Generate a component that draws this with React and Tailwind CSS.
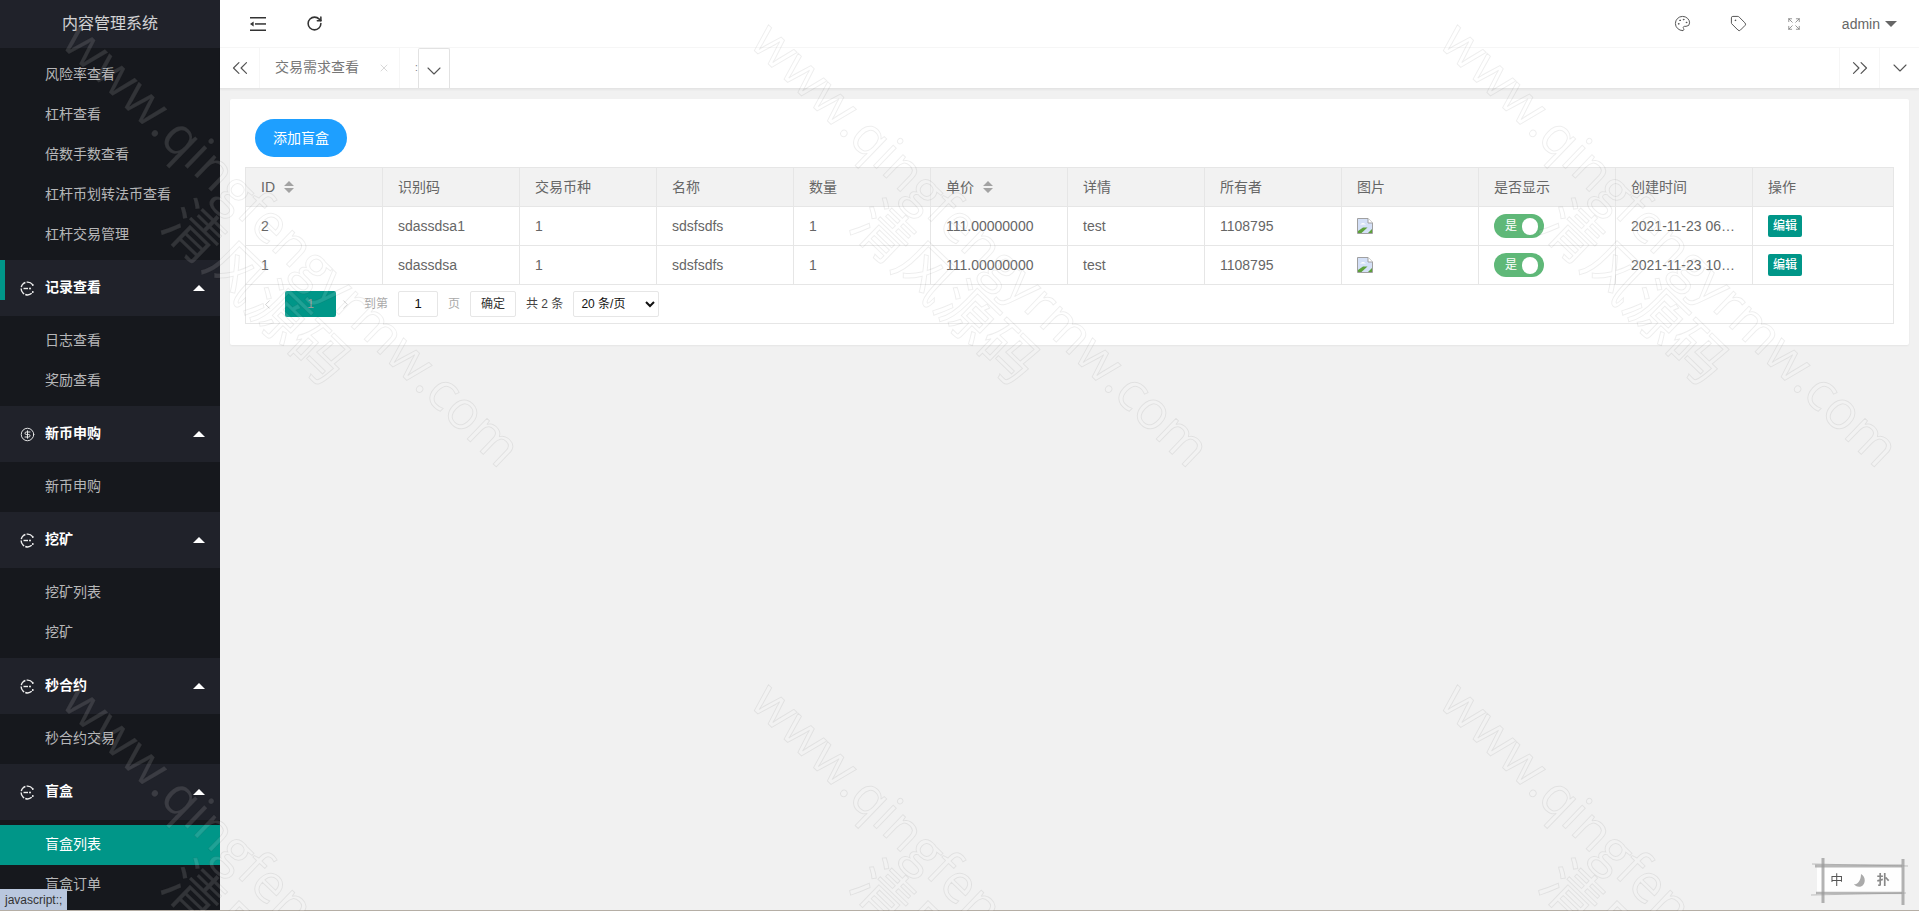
import { ChevronDown, ChevronLeft, ChevronRight, ChevronsLeft, ChevronsRight, CircleDollarSign, Expand, Palette, RotateCw, Tag, X } from 'lucide-react'

const sections = [
  { items: ['风险率查看', '杠杆查看', '倍数手数查看', '杠杆币划转法币查看', '杠杆交易管理'] },
  { title: '记录查看', bar: true, items: ['日志查看', '奖励查看'] },
  { title: '新币申购', dollar: true, items: ['新币申购'] },
  { title: '挖矿', items: ['挖矿列表', '挖矿'] },
  { title: '秒合约', items: ['秒合约交易'] },
  { title: '盲盒', items: ['盲盒列表', '盲盒订单'], active: '盲盒列表' },
]

const columns = [
  { label: 'ID', sort: true },
  { label: '识别码' },
  { label: '交易币种' },
  { label: '名称' },
  { label: '数量' },
  { label: '单价', sort: true },
  { label: '详情' },
  { label: '所有者' },
  { label: '图片' },
  { label: '是否显示' },
  { label: '创建时间' },
  { label: '操作' },
]

const rows = [
  { id: 2, code: 'sdassdsa1', created: '2021-11-23 06:12:45' },
  { id: 1, code: 'sdassdsa', created: '2021-11-23 10:33:08' },
]

function MenuIcon() {
  return (
    <svg width="15" height="15" viewBox="0 0 15 15" fill="none" stroke="currentColor" strokeWidth="1.4">
      <path d="M12.6 3.6A6.4 6.4 0 1 0 12.6 11.4" strokeDasharray="6.5 1.2" />
      <path d="M3.5 7.5h4.5" />
      <circle cx="10" cy="7.5" r="1" fill="currentColor" stroke="none" />
      <path d="M12.8 3v2M12.8 10v2" />
    </svg>
  )
}

function Triangle({ up, className }) {
  return (
    <svg width="12" height="6" viewBox="0 0 12 6" className={className}>
      <path d={up ? 'M6 0L12 6H0Z' : 'M0 0H12L6 6Z'} fill="currentColor" />
    </svg>
  )
}

function SortIcon() {
  return (
    <svg width="10" height="12" viewBox="0 0 10 12" className="ml-[9px] text-[#a3a3a3]">
      <path d="M5 0L10 5H0Z M0 7H10L5 12Z" fill="currentColor" />
    </svg>
  )
}

function ShrinkIcon() {
  return (
    <svg width="16" height="14" viewBox="0 0 16 14" fill="#333">
      <rect x="0" y="0" width="16" height="1.5" />
      <rect x="0" y="12.5" width="16" height="1.5" />
      <rect x="5" y="6.2" width="11" height="1.5" />
      <path d="M0 7L3.6 4.6V9.4Z" />
    </svg>
  )
}

function BrokenImage() {
  return (
    <svg width="16" height="16" viewBox="0 0 16 16">
      <path d="M.5.5H11L15.5 5V15.5H.5Z" fill="#d4e0f7" stroke="#a0a0a0" />
      <path d="M11 .5V5H15.5" fill="#fff" stroke="#a0a0a0" />
      <path d="M3 6.5Q6 3.5 9 6.5Z" fill="#fff" />
      <path d="M1 15V13L6 9.5L10.5 9.5L4.5 15Z" fill="#5da13a" />
      <path d="M11 15L15 11V15Z" fill="#5da13a" />
    </svg>
  )
}

function Sidebar() {
  return (
    <aside className="h-full w-[220px] shrink-0 overflow-hidden bg-[#20222a]">
      <div className="flex h-12 items-center justify-center text-base text-white/80">内容管理系统</div>
      {sections.map((s, i) => (
        <div key={i}>
          {s.title && (
            <div className="relative flex h-14 items-center pl-5 pr-[15px] font-bold text-white">
              {s.bar && <span className="absolute left-0 top-0 h-10 w-[5px] bg-[#009688]" />}
              <span className="flex w-[25px] text-[#eee]">
                {s.dollar ? <CircleDollarSign size={15} strokeWidth={1.5} /> : <MenuIcon />}
              </span>
              <span className="flex-1 -translate-y-px text-sm">{s.title}</span>
              <Triangle up />
            </div>
          )}
          <div className={s.title ? 'bg-[#16181d] py-[5px]' : 'bg-[#16181d] pb-[5px] pt-[7px]'}>
            {s.items.map((item) => (
              <div
                key={item}
                className={`flex h-10 items-center pl-[45px] text-sm ${
                  s.active === item ? 'bg-[#009688] text-white' : 'text-white/70'
                }`}
              >
                <span className="-translate-y-px">{item}</span>
              </div>
            ))}
          </div>
        </div>
      ))}
    </aside>
  )
}

function TopBar() {
  return (
    <div className="flex h-12 shrink-0 items-center border-b border-[#f6f6f6] bg-white">
      <div className="ml-[30px] flex w-[56px]"><ShrinkIcon /></div>
      <RotateCw size={17} strokeWidth={2.2} className="text-[#333]" />
      <div className="ml-auto flex items-center text-[#555]">
        <Palette size={17} strokeWidth={1.4} />
        <Tag size={17} strokeWidth={1.4} className="ml-[39px]" />
        <Expand size={14} strokeWidth={1.3} className="ml-10 text-[#777]" />
        <span className="ml-[41px] text-sm text-[#666]">admin</span>
        <Triangle className="ml-[5px] text-[#666]" />
        <span className="w-[22px]" />
      </div>
    </div>
  )
}

function TabBar() {
  return (
    <div className="flex h-[41px] shrink-0 items-stretch border-b border-[#e4e4e4] bg-white shadow-[0_1px_2px_rgba(0,0,0,0.05)]">
      <div className="flex w-10 items-center justify-center border-r border-[#f6f6f6] text-[#555]">
        <ChevronsLeft size={26} strokeWidth={1.1} />
      </div>
      <div className="flex w-[140px] items-center border-r border-[#f6f6f6] pl-[15px] text-sm text-[#777]">
        <span className="-translate-y-px">交易需求查看</span>
        <X size={12} strokeWidth={1.3} className="ml-[19px] text-[#c2c2c2]" />
      </div>
      <div className="flex w-[18px] items-center pl-[15px] text-[10px] text-[#777]">:</div>
      <div className="flex w-8 items-center justify-center rounded-t-[2px] border-x border-t border-[#e2e2e2] pt-1 text-[#555]">
        <ChevronDown size={24} strokeWidth={1.1} />
      </div>
      <div className="flex-1" />
      <div className="flex w-10 items-center justify-center border-l border-[#f6f6f6] text-[#555]">
        <ChevronsRight size={26} strokeWidth={1.1} />
      </div>
      <div className="flex w-10 items-center justify-center border-l border-[#f6f6f6] text-[#555]">
        <ChevronDown size={24} strokeWidth={1.1} />
      </div>
    </div>
  )
}

function Pager() {
  return (
    <div className="flex h-[39px] items-center border-x border-b border-[#e6e6e6] text-xs">
      <ChevronLeft size={15} strokeWidth={1.2} className="ml-[14px] text-[#c2c2c2]" />
      <div className="ml-[10px] flex h-[26px] w-[51px] items-center justify-center rounded-[2px] bg-[#009688] text-[#999]">1</div>
      <ChevronRight size={15} strokeWidth={1.2} className="ml-[2px] text-[#c2c2c2]" />
      <span className="ml-[11px] text-[#aaa]">到第</span>
      <div className="ml-[10px] flex h-[26px] w-10 items-center justify-center rounded-[2px] border border-[#e6e6e6] text-[13px] text-[#111]">1</div>
      <span className="ml-[10px] text-[#aaa]">页</span>
      <button className="ml-[10px] h-[26px] w-[46px] rounded-[2px] border border-[#e6e6e6] text-[#333]">确定</button>
      <span className="ml-[10px] text-[#444]">共 2 条</span>
      <select className="ml-[10px] h-[26px] w-[86px] rounded-[2px] border border-[#e6e6e6] bg-white pl-[3px] text-[#111]">
        <option>20 条/页</option>
      </select>
    </div>
  )
}

function DataTable() {
  const td = 'h-[39px] border border-[#e6e6e6] px-[15px] text-sm text-[#666]'
  return (
    <>
      <table className="w-full table-fixed border-collapse">
        <colgroup>
          {columns.map((c, i) => (
            <col key={c.label} className={i < 11 ? 'w-[137px]' : ''} />
          ))}
        </colgroup>
        <thead>
          <tr className="bg-[#f2f2f2]">
            {columns.map((c) => (
              <th key={c.label} className={`${td} text-left font-normal`}>
                <span className="flex items-center">
                  {c.label}
                  {c.sort && <SortIcon />}
                </span>
              </th>
            ))}
          </tr>
        </thead>
        <tbody>
          {rows.map((r) => (
            <tr key={r.id}>
              <td className={td}>{r.id}</td>
              <td className={td}>{r.code}</td>
              <td className={td}>1</td>
              <td className={td}>sdsfsdfs</td>
              <td className={td}>1</td>
              <td className={td}>111.00000000</td>
              <td className={td}>test</td>
              <td className={td}>1108795</td>
              <td className={td}><BrokenImage /></td>
              <td className={td}>
                <span className="flex h-6 w-[50px] items-center rounded-full bg-[#5fb878] pl-[11px] text-xs text-white">
                  是
                  <span className="ml-[5px] h-[17px] w-4 rounded-full bg-white" />
                </span>
              </td>
              <td className={`${td} truncate`}>{r.created}</td>
              <td className={td}>
                <span className="flex h-[22px] w-[34px] items-center justify-center rounded-[2px] bg-[#009688] text-xs font-medium text-white">编辑</span>
              </td>
            </tr>
          ))}
        </tbody>
      </table>
      <Pager />
    </>
  )
}

// the site's diagonal stamp, laid over the whole page
function Watermark() {
  const marks = []
  for (let row = 0; row < 2; row++) {
    for (let col = 0; col < 3; col++) {
      marks.push({ left: 92 + col * 689, top: 11 + row * 660 })
    }
  }
  return (
    <div className="pointer-events-none fixed inset-0 z-40 overflow-hidden">
      {marks.map((m) => (
        <div
          key={`${m.left}-${m.top}`}
          className="absolute origin-top-left rotate-[44deg] whitespace-nowrap leading-none text-white/[0.12] [-webkit-text-stroke:1px_rgba(0,0,0,0.07)]"
          style={{ left: m.left, top: m.top }}
        >
          <div className="text-[53px] leading-none [font-family:'Open_Sans',sans-serif]">www.qingfengyrmw.com</div>
          <div className="ml-[198px] mt-[2px] text-[58px] leading-none [font-family:'Noto_Sans_CJK_SC',sans-serif]">清风源码</div>
        </div>
      ))}
    </div>
  )
}

function ImeStamp() {
  return (
    <div className="fixed bottom-[16px] right-[16px] z-50 flex h-[30px] w-[86px] items-center justify-around bg-white/90 px-2 text-[13px] text-[#888]">
      <svg width="100" height="50" viewBox="0 0 100 50" fill="none" stroke="#999" className="absolute -left-[7px] -top-[10px] blur-[0.6px]">
        <path d="M2 9L98 11" strokeWidth="1" opacity="0.6" />
        <path d="M5 11H92" strokeWidth="3" opacity="0.7" />
        <path d="M1 40L96 38" strokeWidth="1" opacity="0.6" />
        <path d="M6 38H92" strokeWidth="2.5" opacity="0.7" />
        <path d="M13 3V48" strokeWidth="3" opacity="0.75" />
        <path d="M93 4V50" strokeWidth="3" opacity="0.75" />
      </svg>
      <span className="text-[#555]">中</span>
      <svg width="12" height="13" viewBox="0 0 12 13">
        <path d="M7 0C12 3 12 10 7 12.5C4 13.5 1 12 0 10C4 11 7 6 7 0Z" fill="#aaa" />
      </svg>
      <span className="font-bold">扑</span>
    </div>
  )
}

export default function App() {
  return (
    <div className="relative flex h-screen overflow-hidden border-b border-[#b5aea5] bg-[#f1f1f1] text-sm [font-family:'Liberation_Sans','Noto_Sans_CJK_SC',sans-serif]">
      <Sidebar />
      <main className="flex min-w-0 flex-1 flex-col">
        <TopBar />
        <TabBar />
        <div className="p-[10px]">
          <div className="rounded-[2px] bg-white px-[15px] pb-[21px] pt-5 shadow-[0_1px_2px_rgba(0,0,0,0.05)]">
            <button className="mb-[10px] ml-[10px] block h-[38px] w-[92px] rounded-full bg-[#1e9fff] text-sm text-white">添加盲盒</button>
            <DataTable />
          </div>
        </div>
      </main>
      <div className="absolute bottom-0 left-0 z-50 flex h-[21px] items-center bg-[#b9c7de] px-[5px] text-xs text-[#333]">javascript:;</div>
      <ImeStamp />
      <Watermark />
    </div>
  )
}
